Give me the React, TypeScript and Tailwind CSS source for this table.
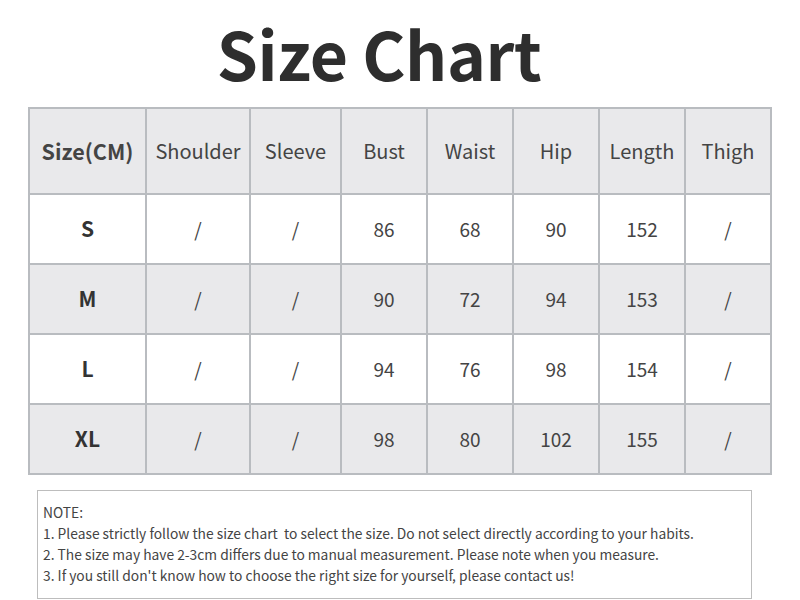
import React from "react";

const cols = ["w-[115px]", "w-[102px]", "w-[89px]", "w-[84px]", "w-[84px]", "w-[84px]", "w-[84px]", "w-[84px]"];
const headers = ["Size(CM)", "Shoulder", "Sleeve", "Bust", "Waist", "Hip", "Length", "Thigh"];
const rows = [
  ["S", "/", "/", "86", "68", "90", "152", "/"],
  ["M", "/", "/", "90", "72", "94", "153", "/"],
  ["L", "/", "/", "94", "76", "98", "154", "/"],
  ["XL", "/", "/", "98", "80", "102", "155", "/"],
];

export default function App() {
  return (
    <div
      className="w-[800px] h-[600px] bg-white overflow-hidden text-[#333]"
      style={{ fontFamily: '"Noto Sans CJK SC", "Noto Sans", sans-serif' }}
    >
      <div className="h-[107px] flex justify-center items-start">
        <h1 className="mt-[7px] mr-[42px] text-[66px] leading-[90px] font-bold text-[#2e2e2e] tracking-[-0.4px]">
          Size Chart
        </h1>
      </div>
      <div className="ml-[28px] w-fit flex flex-col gap-[2px] p-[2px] bg-[#b9bcc0]">
        <div className="flex gap-[2px]">
          {headers.map((h, i) => (
            <div
              key={h}
              className={`${cols[i]} h-[84px] bg-[#e9e9eb] flex items-center justify-center text-[#444] ${i === 0 ? "font-bold text-[21.5px]" : "text-[20px]"}`}
            >
              {h}
            </div>
          ))}
        </div>
        {rows.map((r, ri) => (
          <div key={ri} className="flex gap-[2px]">
            {r.map((c, i) => (
              <div
                key={i}
                className={`${cols[i]} h-[68px] flex items-center justify-center ${ri % 2 === 1 ? "bg-[#e9e9eb]" : "bg-white"} ${i === 0 ? "font-bold text-[21px] text-[#333]" : "text-[19px] text-[#444]"}`}
              >
                {c}
              </div>
            ))}
          </div>
        ))}
      </div>
      <div className="ml-[37px] mt-[15px] w-[715px] h-[109px] border border-[#bdbdbd] pl-[5px] pt-[11px] text-[13.8px] leading-[21px] text-[#444]">
        <div>NOTE:</div>
        <div>1. Please strictly follow the size chart&nbsp; to select the size. Do not select directly according to your habits.</div>
        <div>2. The size may have 2-3cm differs due to manual measurement. Please note when you measure.</div>
        <div>3. If you still don't know how to choose the right size for yourself, please contact us!</div>
      </div>
    </div>
  );
}
